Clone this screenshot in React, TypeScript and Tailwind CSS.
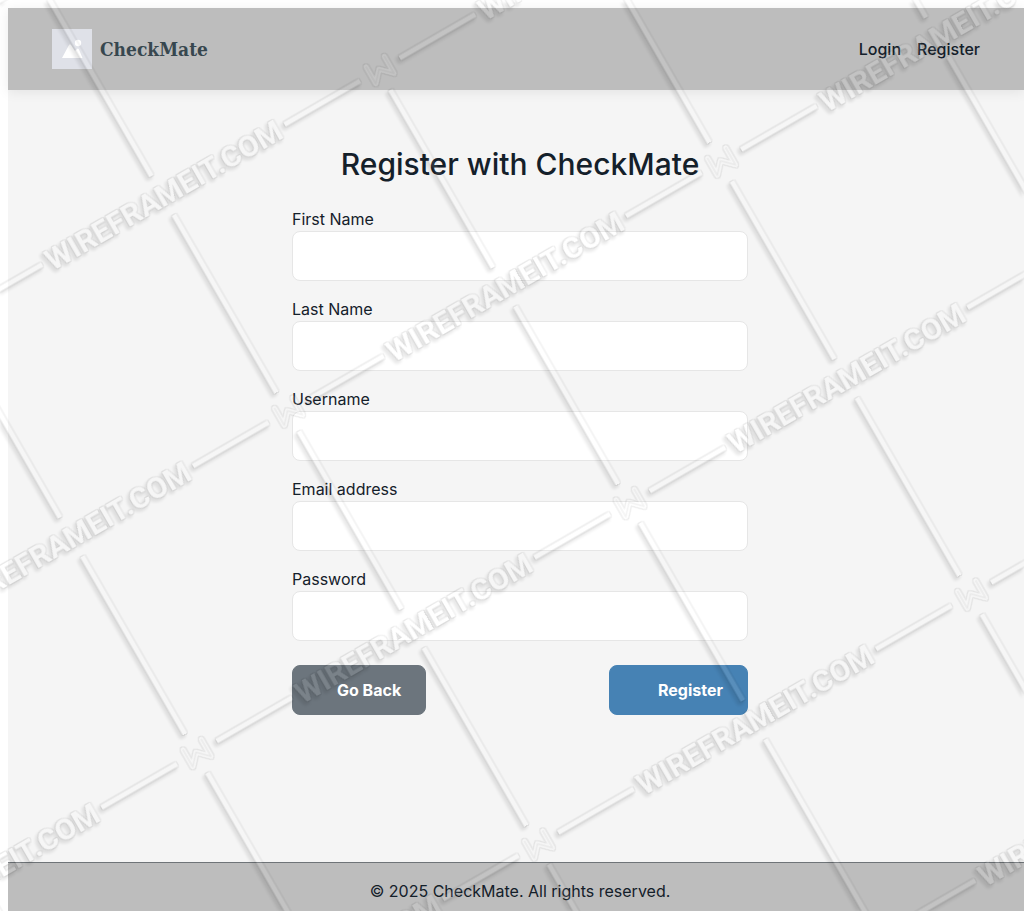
const fields = [
  { id: "first-name", label: "First Name", type: "text" },
  { id: "last-name", label: "Last Name", type: "text" },
  { id: "username", label: "Username", type: "text" },
  { id: "email", label: "Email address", type: "email" },
  { id: "password", label: "Password", type: "password" },
];

const range = [-3, -2, -1, 0, 1, 2, 3];

// Lattice of logo marks: rows are 250 apart and every other row is shifted by half a period.
const nodes = range.flatMap((row) =>
  range.map((col) => ({ x: col * 500 + (row % 2 === 0 ? 0 : 250), y: row * 250 })),
);

const bars = "M24 -2.5H111V2.5H24ZM391 -2.5H478V2.5H391ZM-2.5 23H2.5V228H-2.5ZM-2.5 273H2.5V478H-2.5Z";
const mark = "M-10 -10.5L-10 9L0 -2L11 9L11 -10.5";

function Watermark() {
  return (
    <svg className="pointer-events-none absolute inset-0 h-full w-full" aria-hidden="true">
      <defs>
        {/* Embossed look: faint light face, thin dark rim, soft shadow to the lower left. */}
        <filter
          id="emboss"
          filterUnits="userSpaceOnUse"
          x="0"
          y="0"
          width="100%"
          height="100%"
          colorInterpolationFilters="sRGB"
        >
          <feMorphology in="SourceAlpha" operator="dilate" radius="1" result="grown" />
          <feOffset in="grown" dx="-2" dy="3" result="moved" />
          <feGaussianBlur in="moved" stdDeviation="1.5" result="blurred" />
          <feComponentTransfer in="blurred" result="shade">
            <feFuncA type="linear" slope="0.09" />
          </feComponentTransfer>
          <feComponentTransfer in="grown" result="rim">
            <feFuncA type="linear" slope="0.06" />
          </feComponentTransfer>
          <feMerge result="dark">
            <feMergeNode in="shade" />
            <feMergeNode in="rim" />
          </feMerge>
          <feComposite in="dark" in2="SourceAlpha" operator="out" result="outer" />
          <feComponentTransfer in="SourceGraphic" result="face">
            <feFuncA type="linear" slope="0.1" />
          </feComponentTransfer>
          <feMerge>
            <feMergeNode in="outer" />
            <feMergeNode in="face" />
          </feMerge>
        </filter>
        <filter
          id="outline"
          filterUnits="userSpaceOnUse"
          x="0"
          y="0"
          width="100%"
          height="100%"
          colorInterpolationFilters="sRGB"
        >
          <feMorphology in="SourceAlpha" operator="dilate" radius="1" result="grown" />
          <feComposite in="grown" in2="SourceAlpha" operator="out" result="ring" />
          <feComponentTransfer in="ring" result="rim">
            <feFuncA type="linear" slope="0.08" />
          </feComponentTransfer>
          <feComponentTransfer in="SourceGraphic" result="face">
            <feFuncA type="linear" slope="0.12" />
          </feComponentTransfer>
          <feMerge>
            <feMergeNode in="rim" />
            <feMergeNode in="face" />
          </feMerge>
        </filter>
        <g id="wm-shape">
          <path d={bars} />
          <text
            x="251"
            y="11"
            textAnchor="middle"
            className="font-['Roboto'] text-[30px] font-bold"
          >
            WIREFRAMEIT.COM
          </text>
        </g>
        <path id="wm-mark" d={mark} fill="none" strokeLinecap="round" strokeLinejoin="round" />
      </defs>
      <g filter="url(#emboss)">
        <g transform="translate(629 503) rotate(-30)" fill="#fff">
          {nodes.map((n) => (
            <use key={`${n.x},${n.y}`} href="#wm-shape" x={n.x} y={n.y} />
          ))}
        </g>
      </g>
      <g filter="url(#outline)">
        <g transform="translate(630 504) rotate(-30)" stroke="#fff" strokeWidth="5">
          {nodes.map((n) => (
            <use key={`${n.x},${n.y}`} href="#wm-mark" x={n.x} y={n.y} />
          ))}
        </g>
      </g>
      <g transform="translate(630 504) rotate(-30)" stroke="#000" strokeOpacity="0.05" strokeWidth="1.5">
        {nodes.map((n) => (
          <use key={`${n.x},${n.y}`} href="#wm-mark" x={n.x} y={n.y} />
        ))}
      </g>
    </svg>
  );
}

export default function App() {
  return (
    <div className="relative flex min-h-screen flex-col overflow-hidden bg-white pt-2 pl-2 font-['Inter',sans-serif] text-base text-[#14202a]">
      <div className="flex grow flex-col bg-[#f5f5f5]">
        <header className="flex items-center justify-between bg-[#bdbdbd] py-[21px] pr-9 pl-11 shadow-[0_2px_12px_rgba(0,0,0,0.08)]">
          <a href="#" className="flex items-center gap-2">
            <svg viewBox="0 0 40 40" className="size-10" aria-hidden="true">
              <rect width="40" height="40" fill="#dfe1e8" />
              <path d="M10 29L17 16Q18 14.500 19 16L23 22L25 20Q26 19 27 20.500L30.500 29Z" fill="#fff" />
              <circle cx="26" cy="14" r="3.200" fill="#fff" />
            </svg>
            <span className="font-['Roboto_Slab','DejaVu_Serif_Condensed','DejaVu_Serif',serif] text-[19px] font-bold text-[#37474f]">
              CheckMate
            </span>
          </a>
          <nav className="flex font-medium">
            <a href="#" className="px-2">Login</a>
            <a href="#" className="px-2">Register</a>
          </nav>
        </header>

        <main className="flex grow flex-col items-center pt-14 pb-12 pl-2">
          <h1 className="mb-6 text-[30px] leading-[37px] font-medium">Register with CheckMate</h1>
          <form className="w-full max-w-[456px]">
            <div className="flex flex-col gap-4">
              {fields.map((f) => (
                <div key={f.id} className="flex flex-col">
                  <label htmlFor={f.id}>{f.label}</label>
                  <input
                    id={f.id}
                    type={f.type}
                    className="h-[50px] w-full rounded-lg border border-[#e6e6e6] bg-white px-3"
                  />
                </div>
              ))}
            </div>
            <div className="mt-6 flex justify-between">
              <button
                type="button"
                className="h-[50px] rounded-lg border border-[#6c757d] bg-[#6c757d] pr-6 pl-11 font-bold text-white"
              >
                Go Back
              </button>
              <button
                type="submit"
                className="h-[50px] rounded-lg border border-[#4682b4] bg-[#4682b4] pr-6 pl-12 font-bold text-white"
              >
                Register
              </button>
            </div>
          </form>
        </main>

        <footer className="border-t border-[#6f7478] bg-[#bdbdbd] pt-4 pb-2 pl-2 text-center">
          © 2025 CheckMate. All rights reserved.
        </footer>
      </div>
      <Watermark />
    </div>
  );
}
